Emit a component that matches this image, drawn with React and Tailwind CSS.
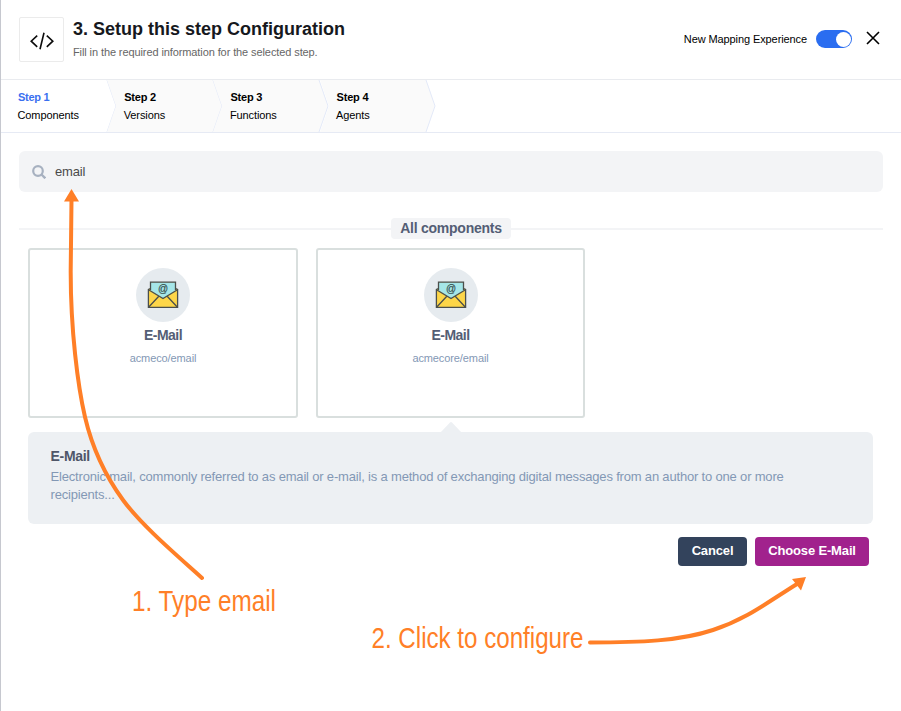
import React from "react";

const steps = [
  { title: "Step 1", label: "Components", active: true },
  { title: "Step 2", label: "Versions" },
  { title: "Step 3", label: "Functions" },
  { title: "Step 4", label: "Agents" },
];

const components = [
  { name: "E-Mail", path: "acmeco/email" },
  { name: "E-Mail", path: "acmecore/email" },
];

function EnvelopeIcon() {
  return (
    <svg width="32" height="28" viewBox="0 0 32 28">
      <path d="M1.5 8.5 3.5 7V1.2h25V7l2 1.5v17.8h-29z" fill="#fdd649" />
      <path d="M3.5 1.2h25v8.3L16 17.5 3.5 9.5z" fill="#a5e6e8" />
      <g fill="none" stroke="#4b4f4c" strokeWidth="1.3">
        <path d="M3.5 9V1.2h25V9" />
        <path d="M3.5 7.5 1.4 8.5v17.8h29.2V8.5l-2.1-1" />
        <path d="M1.5 8.8 16 17.5l14.5-8.7" />
        <path d="M1.8 26 11.8 15.2M30.2 26 20.2 15.2" />
      </g>
      <text x="16" y="11.4" textAnchor="middle" fontSize="10" stroke="#35504f" strokeWidth="0.2" fill="#35504f" fontFamily="Liberation Sans, sans-serif">@</text>
    </svg>
  );
}

function Header() {
  return (
    <header className="flex h-20 items-start border-b border-[#e9ebef] pl-[18px] pr-[21px]">
      <div className="mt-[17px] flex h-[45px] w-[45px] items-center justify-center rounded-[2px] border border-[#ebebeb]">
        <svg className="mt-[2px]" width="24" height="18" viewBox="0 0 24 18" fill="none" stroke="#0c0c0c" strokeWidth="1.6">
          <path d="M7.2 3.600 1.200 9.200l6 5.600M16.800 3.600l6 5.600-6 5.600M14 .8 10 17.200" />
        </svg>
      </div>
      <div className="ml-[9px] mt-[17px]">
        <h1 className="text-[18px] font-bold leading-6 text-[#16181d]">3. Setup this step Configuration</h1>
        <p className="mt-[3px] text-[11px] leading-4 tracking-[-0.1px] text-[#666]">Fill in the required information for the selected step.</p>
      </div>
      <div className="ml-auto mt-[29px] flex h-5 items-center">
        <span className="text-[11px] tracking-[-0.1px] text-black">New Mapping Experience</span>
        <span className="ml-[9px] flex h-[18px] w-9 items-center justify-end rounded-full bg-[#2a6df0] pr-px">
          <span className="h-[15px] w-[15px] rounded-full bg-white" />
        </span>
        <svg className="mb-[2px] ml-[14px]" width="14" height="14" viewBox="0 0 14 14" stroke="#000" strokeWidth="1.6">
          <path d="M1 1l12 12M13 1 1 13" />
        </svg>
      </div>
    </header>
  );
}

function Stepper() {
  return (
    <nav className="flex h-[53px] border-b border-[#e6eaf4]">
      {steps.map((s) => (
        <div key={s.title} className="relative h-[52px] w-[106.2px]">
          <svg className="absolute left-0 top-0" width="116" height="52" viewBox="0 0 116 52">
            <path d="M0 0h106l9 26-9 26H0l9-26z" fill={s.active ? "#fff" : "#fafafa"} />
            <path d="M106 0l9 26-9 26" fill="none" stroke="#e3e9f8" />
          </svg>
          <div className="relative pl-[17px] pt-[8px] text-[11px] leading-[18px] text-black">
            <div className={s.active ? "font-bold tracking-[-0.3px] text-[#3a6ff0]" : "font-bold tracking-[-0.2px]"}>{s.title}</div>
            <div className="-ml-[0.5px] tracking-[-0.1px]">{s.label}</div>
          </div>
        </div>
      ))}
    </nav>
  );
}

function Annotations() {
  return (
    <svg className="pointer-events-none absolute -left-px top-0" width="901" height="711" viewBox="0 0 901 711">
      <g fill="none" stroke="#ff7f27" strokeWidth="4" strokeLinecap="round">
        <path d="M202 578C180 558 142 526 123 500S92 447 85 417C78 387 70.500 330 70.700 270L71.500 200" />
        <path d="M590 642.500C640 642.500 680 641 713 630S765 604 797 584" />
      </g>
      <path d="M71.500 189 64 201.500h15zM806 577l-14 2 9 11.500z" fill="#ff7f27" />
      <g fill="#ff7f27" fontSize="29" fontFamily="Liberation Sans, Arial, sans-serif">
        <text x="132" y="611" textLength="144" lengthAdjust="spacingAndGlyphs">1. Type email</text>
        <text x="371.500" y="648" textLength="212" lengthAdjust="spacingAndGlyphs">2. Click to configure</text>
      </g>
    </svg>
  );
}

export default function App() {
  return (
    <div className="relative h-[711px] w-[901px] overflow-hidden border-l border-[#c6c8cf] bg-white font-['Liberation_Sans',Arial,sans-serif]">
      <Header />
      <Stepper />
      <main className="pl-[18px] pr-[18px] pt-[18px]">
        <div className="flex h-[41px] items-center rounded-md bg-[#f3f4f6] pl-[13px]">
          <svg width="14" height="14" viewBox="0 0 14 14" fill="none" stroke="#a7b1c0" strokeWidth="2.2">
            <circle cx="6" cy="6" r="4.800" />
            <path d="M9.500 9.500 13.300 13.300" strokeWidth="2.400" />
          </svg>
          <span className="ml-[9px] text-[13px] tracking-[-0.2px] text-[#4a4a4a]">email</span>
        </div>
        <div className="mt-[26px] flex h-[21px] items-center">
          <div className="h-[2px] flex-1 bg-[#f3f4f6]" />
          <h2 className="flex h-[21px] w-[120px] items-center justify-center rounded bg-[#f3f4f6] text-[14px] font-bold tracking-[-0.25px] text-[#545e75]">All components</h2>
          <div className="h-[2px] flex-1 bg-[#f3f4f6]" />
        </div>
        <div className="ml-[9px] mt-[9px] flex gap-[18px]">
          {components.map((c) => (
            <article key={c.path} className="flex h-[170px] w-[270px] flex-col items-center rounded-[3px] border-2 border-[#d9dfde] pt-[18px] last:w-[269px]">
              <div className="flex h-[54px] w-[54px] items-center justify-center rounded-full bg-[#e6ebef]">
                <EnvelopeIcon />
              </div>
              <h3 className="mt-1 text-[14px] font-bold leading-[18px] tracking-[-0.5px] text-[#545e75]">{c.name}</h3>
              <p className="mt-[6px] text-[11px] leading-4 tracking-[-0.1px] text-[#8398b5]">{c.path}</p>
            </article>
          ))}
        </div>
        <section className="relative ml-[9px] mr-[10px] mt-[14px] h-[92px] rounded-md bg-[#edf0f3] pl-[22.5px] pr-[40px] pt-[15px]">
          <svg className="absolute -top-[11px] left-[411px]" width="24" height="12" viewBox="0 0 24 12">
            <path d="M1 12 11 1.500q1-1 2 0L23 12z" fill="#edf0f3" />
          </svg>
          <h3 className="text-[14px] font-bold leading-[18px] tracking-[-0.3px] text-[#4f5668]">E-Mail</h3>
          <p className="mt-[3px] whitespace-nowrap text-[13px] leading-[18px] tracking-[-0.18px] text-[#8398b5]">
            Electronic mail, commonly referred to as email or e-mail, is a method of exchanging digital messages from an author to one or more
            <br />
            recipients...
          </p>
        </section>
        <div className="mr-[14px] mt-[13px] flex justify-end gap-2">
          <button className="h-[29px] w-[69px] rounded bg-[#33435c] pb-[2px] text-[13px] font-bold tracking-[-0.15px] text-white">Cancel</button>
          <button className="h-[29px] w-[114px] rounded bg-[#a1228d] pb-[2px] text-[13px] font-bold tracking-[-0.15px] text-white">Choose E-Mail</button>
        </div>
      </main>
      <Annotations />
    </div>
  );
}
